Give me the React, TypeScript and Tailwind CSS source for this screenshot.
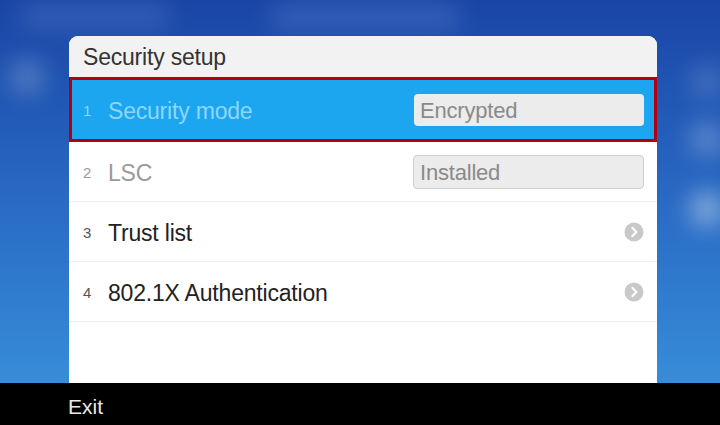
import React from 'react';

const font = { fontFamily: '"Liberation Sans", Arial, sans-serif' };

const Chevron: React.FC = () => (
  <svg width="20" height="20" viewBox="0 0 20 20">
    <circle cx="10" cy="10" r="9.5" fill="#c9c9c9" />
    <path d="M8.4 5.9 L12.4 10 L8.4 14.1" fill="none" stroke="#ffffff" strokeWidth="2.2" strokeLinecap="round" strokeLinejoin="round" />
  </svg>
);

export default function App() {
  return (
    <div
      className="relative w-[720px] h-[425px] overflow-hidden flex flex-col bg-gradient-to-b from-[#1a45a6] via-[#2a6cc6] to-[#3b95dc]"
      style={font}
    >
      {/* blurred background shapes */}
      <div className="absolute left-[20px] top-[6px] w-[150px] h-[20px] rounded-full bg-[#5a80c8] opacity-50 blur-md" />
      <div className="absolute left-[270px] top-[6px] w-[190px] h-[22px] rounded-full bg-[#5a80c8] opacity-50 blur-md" />
      <div className="absolute left-[10px] top-[60px] w-[34px] h-[34px] rounded-full bg-[#8aa8d0] opacity-50 blur-md" />
      <div className="absolute left-[690px] top-[65px] w-[34px] h-[34px] rounded-full bg-[#7a98d0] opacity-40 blur-md" />
      <div className="absolute left-[690px] top-[122px] w-[34px] h-[34px] rounded-full bg-[#98b4dc] opacity-50 blur-md" />
      <div className="absolute left-[690px] top-[192px] w-[34px] h-[34px] rounded-full bg-[#b4cbe6] opacity-70 blur-md" />

      <div className="h-[36px] shrink-0" />

      <div className="relative ml-[69px] w-[588px] flex-1 flex flex-col bg-white rounded-t-[9px] overflow-hidden">
        <div className="h-[41px] shrink-0 flex items-center px-[14px] pt-[2px] bg-[#f3f2f3] text-[23px] tracking-[-0.2px] text-[#333]">
          Security setup
        </div>

        <div className="h-[65px] shrink-0 flex items-center border-[3px] border-[#b3000e] bg-[#1ba6ef] pl-[11px] pr-[10px]">
          <span className="w-[25px] pt-[3px] text-[15px] text-[#8fd6fa]">1</span>
          <span className="flex-1 pt-[3px] text-[23px] tracking-[-0.2px] text-[#8fd6fa]">Security mode</span>
          <div className="w-[230px] h-[32px] flex items-center px-[6px] pt-[2px] rounded-[4px] bg-[#ececec] text-[22px] tracking-[-0.2px] text-[#8a8a8a]">
            Encrypted
          </div>
        </div>

        <div className="h-[60px] shrink-0 flex items-center pl-[14px] pr-[13px] border-b border-[#ededed]">
          <span className="w-[25px] pt-[3px] text-[15px] text-[#9a9a9a]">2</span>
          <span className="flex-1 pt-[3px] text-[23px] tracking-[-0.2px] text-[#9a9a9a]">LSC</span>
          <div className="w-[231px] h-[34px] flex items-center px-[6px] pt-[2px] rounded-[4px] border border-[#cfcfcf] bg-[#ececec] text-[22px] tracking-[-0.2px] text-[#8a8a8a]">
            Installed
          </div>
        </div>

        <div className="h-[60px] shrink-0 flex items-center pl-[14px] pr-[13px] border-b border-[#ededed]">
          <span className="w-[25px] pt-[3px] text-[15px] text-[#555]">3</span>
          <span className="flex-1 pt-[3px] text-[23px] tracking-[-0.2px] text-[#222]">Trust list</span>
          <Chevron />
        </div>

        <div className="h-[60px] shrink-0 flex items-center pl-[14px] pr-[13px] border-b border-[#ededed]">
          <span className="w-[25px] pt-[3px] text-[15px] text-[#555]">4</span>
          <span className="flex-1 pt-[3px] text-[23px] tracking-[-0.2px] text-[#222]">802.1X Authentication</span>
          <Chevron />
        </div>
      </div>

      <div className="h-[42px] shrink-0 bg-black flex items-center pl-[68px] pt-[6px] text-[21px] text-[#e8e8e8]">
        Exit
      </div>
    </div>
  );
}
